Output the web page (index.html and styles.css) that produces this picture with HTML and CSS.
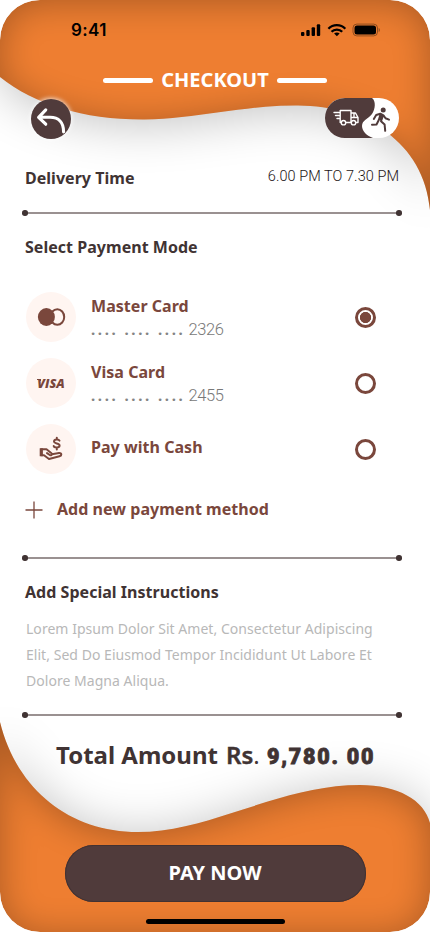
FILE: index.html
```html
<!DOCTYPE html>
<html lang="en">
<head>
<meta charset="utf-8">
<title>Checkout</title>
<meta name="viewport" content="width=device-width, initial-scale=1">
<link rel="stylesheet" href="styles.css">
</head>
<body>
<div class="screen">
  <svg class="backdrop" viewBox="0 0 430 932" aria-hidden="true">
    <defs>
      <filter id="depth" filterUnits="userSpaceOnUse" x="-100" y="-100" width="630" height="1132" color-interpolation-filters="sRGB">
        <feGaussianBlur in="SourceAlpha" stdDeviation="25" result="b"/>
        <feOffset in="b" dy="4" result="o"/>
        <feComponentTransfer in="o" result="drop"><feFuncA type="linear" slope="0.25"/></feComponentTransfer>
        <feComponentTransfer in="SourceAlpha" result="inv"><feFuncA type="table" tableValues="1 0"/></feComponentTransfer>
        <feGaussianBlur in="inv" stdDeviation="18" result="ib"/>
        <feOffset in="ib" dy="3" result="io"/>
        <feComponentTransfer in="io" result="ia"><feFuncA type="linear" slope="0.28"/></feComponentTransfer>
        <feComposite in="ia" in2="SourceAlpha" operator="in" result="inner"/>
        <feMerge><feMergeNode in="drop"/><feMergeNode in="SourceGraphic"/><feMergeNode in="inner"/></feMerge>
      </filter>
    </defs>
    <path filter="url(#depth)" fill="#ee7e31" d="M0 77C35 105 85 120 145 119.500C195 119 245 105 298 105.500C365 106 424 142 430 210V40A40 40 0 0 0 390 0H40A40 40 0 0 0 0 40Z"/>
    <path filter="url(#depth)" fill="#ee7e31" d="M0 722C17 790 70 832 138 832C210 832 280 785 360 785C398 785 424 800 430 823V892A40 40 0 0 1 390 932H40A40 40 0 0 1 0 892Z"/>
  </svg>

  <header class="status">
    <span class="clock">9:41</span>
    <svg class="status-icons" viewBox="0 0 80 14">
      <rect x="1" y="9" width="3.400" height="4" rx="1"/><rect x="6.300" y="7" width="3.400" height="6" rx="1"/><rect x="11.600" y="4.300" width="3.400" height="8.700" rx="1"/><rect x="16.800" y="1.300" width="3.400" height="11.700" rx="1"/>
      <g fill="none" stroke="#000" stroke-width="2.300"><path d="M28.400 5.700C33 .9 40.700.9 45.300 5.700M31.500 8.700C34.300 5.800 39.400 5.800 42.200 8.700"/></g>
      <path d="M36.850 13.300L34.100 10.600C35.500 9.200 38.200 9.200 39.600 10.600Z"/>
      <rect x="53" y="1.100" width="24.500" height="11.800" rx="3.800" fill="none" stroke="#000" stroke-opacity=".38"/>
      <rect x="54.500" y="2.600" width="21.500" height="8.800" rx="2.500"/><path d="M78.700 5v4c1.500-.6 1.500-3.400 0-4Z" opacity=".4"/>
    </svg>
  </header>

  <div class="title"><i></i><h1>CHECKOUT</h1><i></i></div>

  <nav class="controls">
    <button class="back" aria-label="Back">
      <svg viewBox="0 0 42 42"><path d="M15.500 11.500L8 19.200L15.500 26.500M8.500 19.200H20C29 19.200 34.200 24.500 34.200 34.500" fill="none" stroke="#fff" stroke-width="3.300" stroke-linecap="round" stroke-linejoin="round"/></svg>
    </button>
    <svg class="mode" viewBox="0 0 74 40">
      <rect width="74" height="40" rx="20" fill="#fff"/>
      <path d="M20 0H47C51 3 50.500 11 47 16C43 21 37 22 37 28C37 33 42 38 48 40H20A20 20 0 0 1 20 0Z" fill="#503b3b"/>
      <g fill="none" stroke="#fff" stroke-width="1.400" stroke-linejoin="round" stroke-linecap="round">
        <path d="M16.300 24.500H15.200V12.500H26V24.500H20.700M26 15H30.500L33 19.500V24.500H31M26.300 24.500H26M26 19.500H33M29 15V19.500M9 14.500H14M10.500 17.500H14M12 20.500H14"/>
        <circle cx="18.500" cy="24.700" r="2.200"/><circle cx="28.500" cy="24.700" r="2.200"/>
      </g>
      <circle cx="58.200" cy="12" r="2.500" fill="#503b3b"/>
      <path d="M48.800 21L51.200 17L55.300 15.700L58.500 17.300L60.500 20.200L64 21.600M55.500 16.500L53.800 22L51.500 26.500L47 26.800M58 17.500L56 23.200L59.600 26.500L60.200 32.800" fill="none" stroke="#503b3b" stroke-width="2" stroke-linecap="round" stroke-linejoin="round"/>
      <path d="M55.500 16.500L58 17.500L56.500 22.500L54 21.500Z" fill="#503b3b"/>
    </svg>
  </nav>

  <main>
    <section class="delivery"><h2>Delivery Time</h2><span class="slot">6.00 PM TO 7.30 PM</span></section>
    <div class="rule"></div>
    <section class="payment">
      <h2>Select Payment Mode</h2>
      <div class="methods">
        <label class="method">
          <span class="badge"><svg viewBox="0 0 50 50"><ellipse cx="31.300" cy="25" rx="6.900" ry="7.800" fill="none" stroke="#7a473c" stroke-width="2"/><ellipse cx="20.400" cy="25" rx="8.500" ry="9" fill="#7a473c"/></svg></span>
          <span class="info"><b>Master Card</b><span class="number"><em>....</em><em>....</em><em>....</em><span>2326</span></span></span>
          <span class="radio on"></span>
        </label>
        <label class="method">
          <span class="badge visa"><span>VISA</span></span>
          <span class="info"><b>Visa Card</b><span class="number"><em>....</em><em>....</em><em>....</em><span>2455</span></span></span>
          <span class="radio"></span>
        </label>
        <label class="method">
          <span class="badge"><svg viewBox="0 0 50 50"><g fill="none" stroke="#7a473c" stroke-width="2" stroke-linejoin="round" stroke-linecap="round"><path d="M15 25.300H20.500L25.500 29.300C26.800 30.800 25 31.800 23.800 31L21 29.100M26 30.300L33 29C36 28.700 36 31.600 33.500 32.300L23 35L18 31.200H15"/><path d="M33.500 16.600C32.700 15 28.200 15 28 17.400C27.900 20.100 33.700 18.800 33.600 21.600C33.400 24.100 28.200 24 27.700 22M30.800 13.700V15.200M30.800 23.700V25.400"/></g><rect x="13.700" y="24.300" width="3.200" height="7.900" fill="#7a473c"/></svg></span>
          <span class="info single"><b>Pay with Cash</b></span>
          <span class="radio"></span>
        </label>
      </div>
      <button class="add"><svg viewBox="0 0 18 18"><path d="M9 .5V17.500M.5 9H17.500" stroke="#7a473c" stroke-width="1.300"/></svg><span>Add new payment method</span></button>
    </section>
    <div class="rule"></div>
    <section class="notes">
      <h2>Add Special Instructions</h2>
      <p>Lorem Ipsum Dolor Sit Amet, Consectetur Adipiscing<br>Elit, Sed Do Eiusmod Tempor Incididunt Ut Labore Et<br>Dolore Magna Aliqua.</p>
    </section>
    <div class="rule"></div>
    <div class="total"><b>Total Amount</b><b class="currency">Rs<span>.</span></b><strong>9,780. 00</strong></div>
  </main>

  <footer><button class="pay">PAY NOW</button><div class="home"></div></footer>
</div>
</body>
</html>
```
FILE: styles.css
```css
* { box-sizing: border-box; }
body { margin: 0; background: #fff; font-family: "Noto Sans", sans-serif; color: #403333; }
h1, h2, p { margin: 0; }
button { border: 0; padding: 0; background: none; font: inherit; color: inherit; }
svg { display: block; }
.screen { position: relative; width: 430px; height: 932px; overflow: hidden; border-radius: 40px; display: flex; flex-direction: column; isolation: isolate; }
.backdrop { position: absolute; inset: 0; width: 430px; height: 932px; z-index: -1; }
.status { height: 60px; padding: 0 48px 0 71px; display: flex; align-items: center; justify-content: space-between; color: #000; }
.clock { font: 600 17px/20px Inter, sans-serif; letter-spacing: .35px; }
.status-icons { width: 80px; height: 14px; margin-right: 2px; }
.title { height: 38px; display: flex; align-items: center; justify-content: center; gap: 8px; color: #fff; padding-top: 2px; }
.title i { width: 50px; height: 5px; border-radius: 3px; background: #fff; }
h1 { font-size: 20px; line-height: 26px; font-weight: 700; }
.controls { height: 42px; display: flex; justify-content: space-between; padding: 0 31px; }
.back { width: 40px; height: 40px; margin-top: 1px; border-radius: 50%; background: #503b3b; box-shadow: 0 0 4px 1px rgba(255,255,255,.75); }
.back svg { width: 40px; height: 40px; }
.mode { width: 74px; height: 40px; }
main { padding: 0 30px 0 25px; }
h2 { font-size: 16px; line-height: 22px; font-weight: 700; white-space: nowrap; letter-spacing: .03px; }
.delivery { height: 71px; padding-top: 27px; display: flex; justify-content: space-between; }
.slot { font: 300 14.500px/18px Roboto, sans-serif; letter-spacing: .05px; margin-right: 1px; padding-top: 1px; color: #1c1414; white-space: nowrap; }
.rule { height: 4px; margin: 0 -1.500px 0 -3px; display: flex; align-items: center; justify-content: space-between; background: linear-gradient(#9a9191, #9a9191) center / calc(100% - 8px) 2px no-repeat; }
.rule::before, .rule::after { content: ""; width: 5.500px; height: 5.500px; border-radius: 50%; background: #403333; flex: none; }
.payment { height: 341px; padding-top: 21px; }
.methods { margin-top: 34px; display: grid; gap: 16px; }
.method { height: 50px; display: flex; align-items: center; padding: 0 24px 0 1px; }
.badge { width: 50px; height: 50px; border-radius: 50%; background: #fff5f1; flex: none; }
.badge svg { width: 50px; height: 50px; }
.visa { color: #7a473c; font: italic 800 12.500px/52px "Open Sans", sans-serif; text-align: center; }
.visa span { background: linear-gradient(20deg, transparent 30%, #7a473c 40%) 0 4px / 4px 2px no-repeat; }
.info { flex: 1; padding-left: 15px; display: flex; flex-direction: column; height: 50px; padding-top: 3px; color: #7a473c; }
.info b, .add { font-size: 16px; line-height: 22px; font-weight: 700; letter-spacing: .04px; }
.info.single { padding-top: 12px; }
.number { display: flex; align-items: baseline; gap: 7px; margin-top: 1px; color: #787878; font: 300 16.500px/22px Roboto, sans-serif; letter-spacing: -.4px; }
.number em { font: 700 15px/22px "Noto Sans", sans-serif; width: 26.500px; letter-spacing: 2.600px; color: #848484; }
.number > span { margin-left: -3px; }
.radio { width: 21px; height: 21px; border: 3px solid #7a473c; border-radius: 50%; flex: none; }
.on { background: radial-gradient(circle, #7a473c 5.300px, transparent 5.900px); }
.add { display: flex; align-items: center; gap: 14px; margin-top: 26px; color: #7a473c; white-space: nowrap; }
.add svg { width: 18px; height: 18px; }
.add span { margin-top: -2px; }
.notes { height: 153px; padding-top: 21px; }
.notes p { margin-top: 13px; padding-left: 1px; font-size: 14px; line-height: 26px; letter-spacing: .035px; color: #b8b8b8; white-space: nowrap; }
.total { display: flex; align-items: baseline; padding: 21px 0 0 31px; font-size: 24px; line-height: 34px; white-space: nowrap; }
.total > b:first-child { width: 163px; }
.currency { margin-left: 7px; width: 33px; font-weight: 600; -webkit-text-stroke: .4px; }
.currency span { font-weight: 400; -webkit-text-stroke: 0; }
.total strong { font: 900 21.500px/34px Roboto, sans-serif; letter-spacing: 1.750px; margin-left: 8px; -webkit-text-stroke: .8px; }
footer { margin-top: auto; height: 87px; display: flex; flex-direction: column; align-items: center; }
.pay { width: 301px; height: 57px; padding-bottom: 2px; border-radius: 28.500px; background: #503b3b; box-shadow: inset 0 0 0 1px #433232; color: #fff; font-size: 20px; font-weight: 700; }
.home { margin-top: 17px; width: 139px; height: 5px; border-radius: 3px; background: #000; }
```
